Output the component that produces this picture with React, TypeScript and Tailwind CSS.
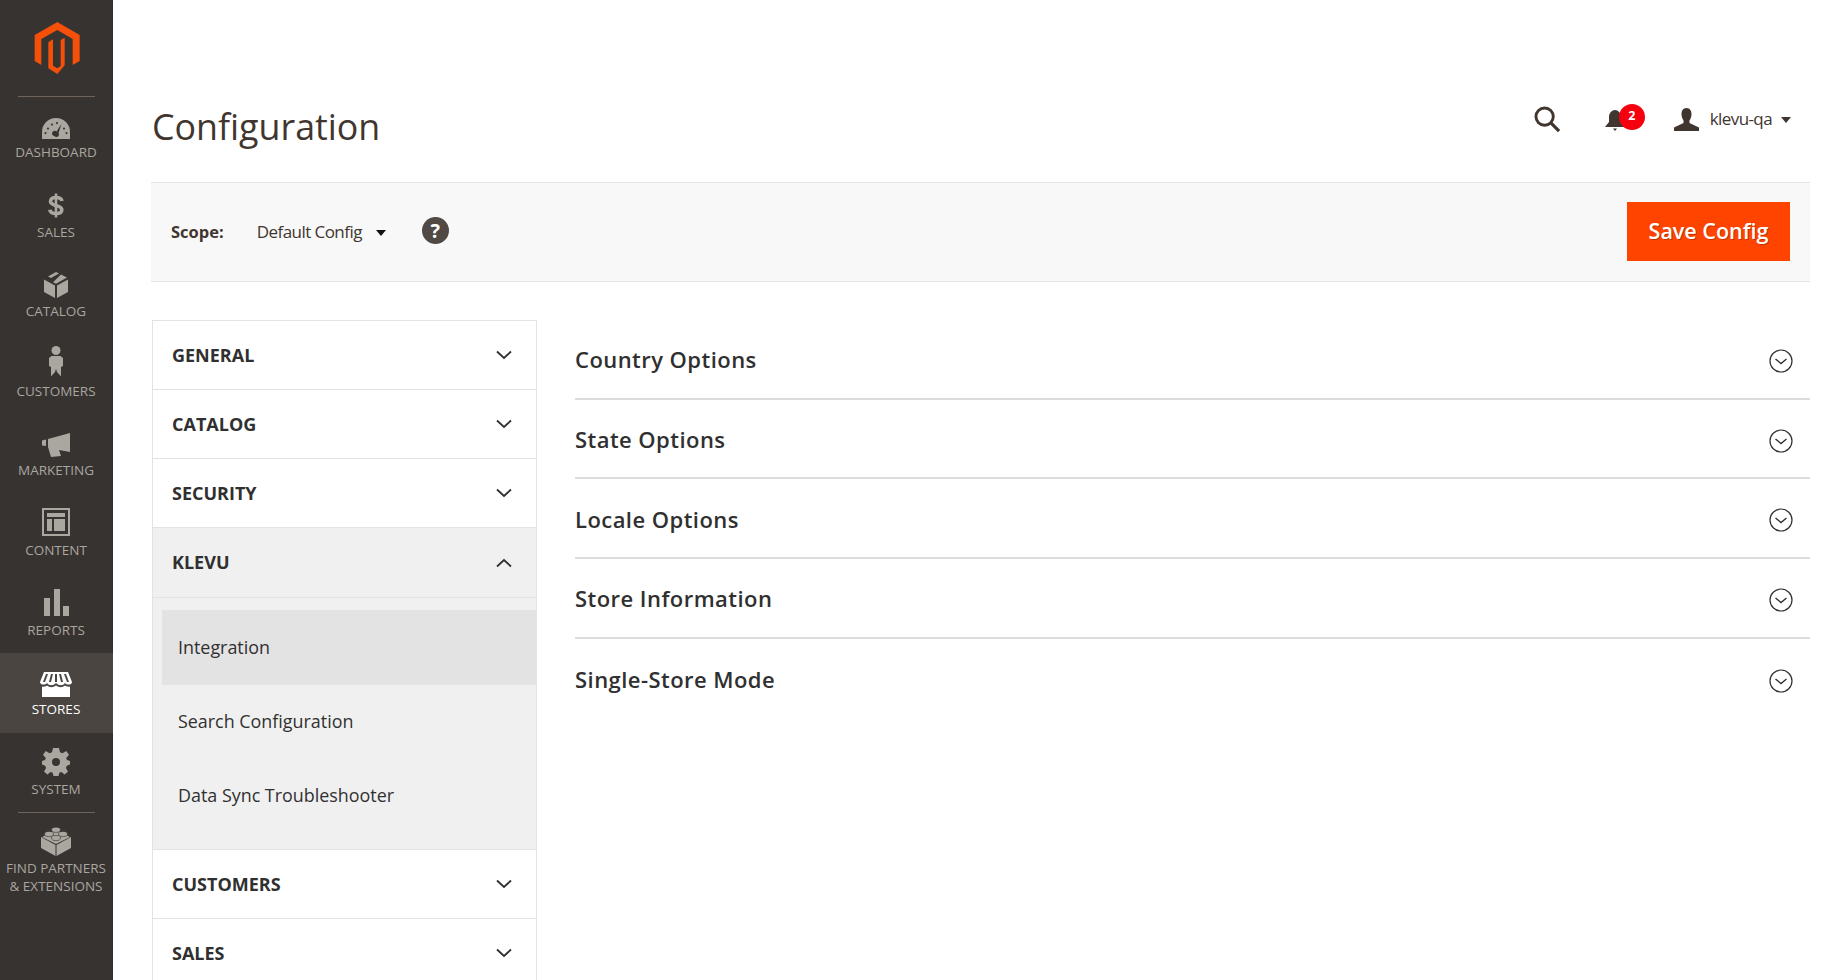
import { ReactNode } from 'react';

const FONT = "font-['Open_Sans',sans-serif]";

function Logo() {
    return (
        <svg viewBox="100 66 138 156" className="w-[46px] h-[52px]">
            <path fill="#f4500a" d="M170 66 237 105V183L216 195V117L170 90 122 117V195L102 183V105Z" />
            <path fill="#f4500a" d="M180 120 192 113V196L170 222 143 205V127L157 118V197L170 205 180 198Z" />
        </svg>
    );
}

const iconFill = 'currentColor';

const navIcons: Record<string, ReactNode> = {
    dashboard: (
        <svg viewBox="0 0 28 21" className="w-[28px] h-[21px]" fill={iconFill}>
            <path fillRule="evenodd" d="M0 21V14A14 14 0 0 1 28 14V21ZM6 9.500a1 1 0 1 0 .01 0ZM10 5.500a1 1 0 1 0 .01 0ZM15 4a1 1 0 1 0 .01 0ZM22 9.500a1 1 0 1 0 .01 0ZM3.500 14a1 1 0 1 0 .01 0ZM24.500 14a1 1 0 1 0 .01 0ZM19.500 6 14.500 13.500A2.500 2.500 0 0 0 11 17.500L13 18.500A2.500 2.500 0 0 0 16.500 15Z" />
        </svg>
    ),
    sales: (
        <svg viewBox="0 0 16 24" className="w-[16px] h-[25px]" fill="none" stroke={iconFill}>
            <path strokeWidth="3.600" d="M14 7.500C13.500 5 11 4 8 4 4.500 4 2.500 5.500 2.500 8S5 11 8 12 13.800 13.500 13.800 16.200 11.500 20 8 20 2.300 19 1.800 16.200" />
            <path strokeWidth="2.600" d="M8 0V24" />
        </svg>
    ),
    catalog: (
        <svg viewBox="0 0 24 26" className="w-[24px] h-[26px]" fill={iconFill}>
            <path d="M0 7.500 11 13.500V26L0 20ZM24 7.500 13 13.500V26L24 20ZM12 0 15 1.500 7 6 4 4.500ZM17 2.500 23 5.500 12 11.800 9 10.200Z" />
        </svg>
    ),
    customers: (
        <svg viewBox="0 0 14 31" className="w-[14px] h-[31px]" fill={iconFill}>
            <circle cx="7" cy="4.500" r="4.500" />
            <path d="M2.500 10H11.500L14 12V20L12 21 12 30.500 8 26 7 23 6 26 2 30.500 2 21 0 20V12Z" />
        </svg>
    ),
    marketing: (
        <svg viewBox="0 0 28 24" className="w-[28px] h-[24px]" fill={iconFill}>
            <path d="M0 7.500 4 6.500V13L0 12.500ZM6 6 28 0V19L17 17 19 23 9 24 6 14Z" />
        </svg>
    ),
    content: (
        <svg viewBox="0 0 28 28" className="w-[28px] h-[28px]" fill={iconFill}>
            <path fillRule="evenodd" d="M0 0H28V28H0ZM2 2V26H26V2ZM5 5H23V9H5ZM5 11H10V23H5ZM12 11H23V23H12Z" />
        </svg>
    ),
    reports: (
        <svg viewBox="0 0 25 27" className="w-[25px] h-[27px]" fill={iconFill}>
            <path d="M0 9H6V27H0ZM10 0H16V27H10ZM19 17H25V27H19Z" />
        </svg>
    ),
    stores: (
        <svg viewBox="0 0 32 26" className="w-[32px] h-[26px]" fill={iconFill}>
            <path fillRule="evenodd" d="M4 0H28L32 10C32 13 27 13.500 25 11 23 14 19 14 16 11 13 14 9 14 7 11 5 13.500 0 13 0 10ZM6 2 3 10H5L8 2ZM11 2 9 10H11L13 2ZM15 2V10H17V2ZM19 2 21 10H23L21 2ZM24 2 27 10H29L26 2ZM2 14.500C4 15 6 14.500 7 13.500 10 16 13 15.500 16 13.500 19 15.500 22 16 25 13.500 26 14.500 28 15 30 14.500V25H2Z" />
        </svg>
    ),
    system: (
        <svg viewBox="0 0 28 28" className="w-[28px] h-[28px]" fill={iconFill}>
            <path fillRule="evenodd" d="M11 0H17L18 4.200 20.500 5.300 24.200 3 27 6.800 24.200 10 25 12 28 13V16.500L24.800 17.800 24 20 26 23.800 22.500 26.500 19.500 24 17.500 24.500 16.500 28H11.500L10.500 24.500 8.500 24 5.500 26.500 2 23.800 4 20 3.200 17.800 0 16.500V13L3 12 3.800 10 1 6.800 3.800 3 7.500 5.300 10 4.200ZM14 10A4 4 0 1 0 14 18 4 4 0 1 0 14 10Z" />
        </svg>
    ),
    partners: (
        <svg viewBox="0 0 30 29" className="w-[30px] h-[29px]" fill={iconFill}>
            <path d="M0 10 14.500 18V29L0 21ZM30 10 15.500 18V29L30 21Z" />
            <path d="M15 3 29 10 15 17 1 10Z" />
            <ellipse cx="15" cy="2.800" rx="4.500" ry="2.600" stroke="#373330" strokeWidth=".6" />
            <ellipse cx="8" cy="7" rx="4.500" ry="2.600" stroke="#373330" strokeWidth=".6" />
            <ellipse cx="22" cy="7" rx="4.500" ry="2.600" stroke="#373330" strokeWidth=".6" />
            <ellipse cx="15" cy="11" rx="4.500" ry="2.600" stroke="#373330" strokeWidth=".6" />
        </svg>
    ),
};

const navItems = [
    { id: 'dashboard', label: 'DASHBOARD', pad: 'pt-[16px]' },
    { id: 'sales', label: 'SALES', pad: 'pt-[12px]' },
    { id: 'catalog', label: 'CATALOG', pad: 'pt-[11px]' },
    { id: 'customers', label: 'CUSTOMERS', pad: 'pt-[6px]' },
    { id: 'marketing', label: 'MARKETING', pad: 'pt-[13px]' },
    { id: 'content', label: 'CONTENT', pad: 'pt-[9px]' },
    { id: 'reports', label: 'REPORTS', pad: 'pt-[10px]' },
    { id: 'stores', label: 'STORES', pad: 'pt-[15px]', active: true },
    { id: 'system', label: 'SYSTEM', pad: 'pt-[10px]' },
];

function Sidebar() {
    return (
        <aside className="w-[113px] shrink-0 bg-[#373330] shadow-[inset_-1px_0_0_#312e2b] flex flex-col">
            <div className="h-[96px] flex justify-center pt-[22px]">
                <Logo />
            </div>
            <div className="h-[1px] mx-[18px] bg-[#6f645c] -mb-[1px]" />
            {navItems.map((item) => (
                <div
                    key={item.id}
                    className={`h-[79.6px] flex flex-col items-center pr-[1px] ${item.active ? 'bg-[#4a4540] text-white' : 'text-[#aaa6a0]'}`}
                >
                    <div className={`h-[48px] flex items-center justify-center ${item.pad}`}>{navIcons[item.id]}</div>
                    <span className="text-[13.5px] leading-[16px]">{item.label}</span>
                </div>
            ))}
            <div className="h-[1px] mx-[18px] bg-[#6f645c]" />
            <div className="flex flex-col items-center text-[#aaa6a0] pt-[14px] pr-[1px]">
                {navIcons.partners}
                <span className="text-[13.5px] leading-[18px] text-center mt-[3px]">
                    FIND PARTNERS
                    <br />& EXTENSIONS
                </span>
            </div>
        </aside>
    );
}

function Header() {
    return (
        <div className="h-[182px] flex items-start justify-between pl-[1px]">
            <h1 className="text-[35.800px] leading-[50px] mt-[101px] text-[#41362f] font-normal">Configuration</h1>
            <div className="flex items-center mt-[106px] pr-[19px] text-[#41362f]">
                <svg viewBox="0 0 28 28" className="w-[27px] h-[27px]" fill="none" stroke="#41362f">
                    <circle cx="11" cy="11" r="9" strokeWidth="3" />
                    <path d="M17.500 17.500 26 26" strokeWidth="3.400" />
                </svg>
                <div className="relative ml-[44px] w-[20px] h-[24px]">
                    <svg viewBox="0 0 20 24" className="w-[20px] h-[24px]" fill="#41362f">
                        <path d="M10 2C13 2 16 5 16 9V14L20 19H0L4 14V9C4 5 7 2 10 2Z" />
                        <path d="M8 20.500H12L10 23Z" />
                    </svg>
                    <span className="absolute left-[14px] -top-[4px] w-[26px] h-[26px] rounded-full bg-[#f5000f] text-white text-[12.5px] font-bold flex items-center justify-center">
                        2
                    </span>
                </div>
                <svg viewBox="0 0 25 23" className="w-[25px] h-[23px] ml-[49px]" fill="#41362f">
                    <path d="M12.500 0C16 0 17.500 3 17.500 6 17.500 9 16.500 11 15.500 12.500V15L25 19.500V23H0V19.500L9.500 15V12.500C8.500 11 7.500 9 7.500 6 7.500 3 9 0 12.500 0Z" />
                </svg>
                <span className="ml-[11px] text-[17px] tracking-[-0.6px] -mt-[1px]">klevu-qa</span>
                <span className="ml-[9px] w-0 h-0 border-x-[5px] border-x-transparent border-t-[6px] border-t-[#41362f]" />
            </div>
        </div>
    );
}

function Toolbar() {
    return (
        <div className="h-[100px] bg-[#f8f8f8] border-y border-[#e3e3e3] flex items-center justify-between pl-[20px] pr-[20px] text-[#41362f]">
            <div className="flex items-center">
                <span className="text-[16.500px] font-bold">Scope:</span>
                <span className="ml-[33px] text-[17px] tracking-[-0.55px]">Default Config</span>
                <span className="ml-[14px] mt-[2px] w-0 h-0 border-x-[5px] border-x-transparent border-t-[6px] border-t-[#111]" />
                <span className="ml-[36px] w-[27px] h-[27px] rounded-full bg-[#514943] text-white text-[20px] font-bold flex items-center justify-center -mt-[3px]">
                    ?
                </span>
            </div>
            <button className="w-[163px] h-[59px] -mt-[1px] bg-[#ff4400] text-white text-[21.500px] font-semibold [text-shadow:1px_1px_0_rgba(0,0,0,0.25)]">
                Save Config
            </button>
        </div>
    );
}

function Chevron({ up }: { up?: boolean }) {
    return (
        <svg viewBox="0 0 16 10" className="w-[16px] h-[10px]" fill="none" stroke="#303030" strokeWidth="1.800">
            <path d={up ? 'M1 8.500 8 2 15 8.500' : 'M1 1.500 8 8 15 1.500'} />
        </svg>
    );
}

function TabRow({ label, open, short }: { label: string; open?: boolean; short?: boolean }) {
    return (
        <div
            className={`${short ? 'h-[70px]' : 'h-[69px]'} flex items-center justify-between pl-[19px] pr-[24px] border-b border-[#e3e3e3] ${open ? 'bg-[#f0f0f0]' : ''}`}
        >
            <span className="text-[18px] font-bold text-[#303030]">{label}</span>
            <Chevron up={open} />
        </div>
    );
}

const subItems = [
    { label: 'Integration', cls: 'h-[75px] bg-[#e3e3e3]' },
    { label: 'Search Configuration', cls: 'h-[73px]' },
    { label: 'Data Sync Troubleshooter', cls: 'h-[75px]' },
];

function ConfigTabs() {
    return (
        <div className="w-[385px] shrink-0 border-x border-t border-[#e3e3e3]">
            <TabRow label="GENERAL" />
            <TabRow label="CATALOG" />
            <TabRow label="SECURITY" />
            <TabRow label="KLEVU" open short />
            <div className="bg-[#f0f0f0] pt-[12px] pl-[9px] pb-[16px] border-b border-[#e3e3e3]">
                {subItems.map((s) => (
                    <div key={s.label} className={`${s.cls} flex items-center pl-[16px] text-[17.900px] text-[#303030]`}>
                        {s.label}
                    </div>
                ))}
            </div>
            <TabRow label="CUSTOMERS" />
            <TabRow label="SALES" />
        </div>
    );
}

const sections = ['Country Options', 'State Options', 'Locale Options', 'Store Information', 'Single-Store Mode'];

function Sections() {
    return (
        <div className="flex-1 min-w-0">
            {sections.map((s, i) => (
                <div
                    key={s}
                    className={`h-[79.7px] flex items-center justify-between pr-[17px] ${i < sections.length - 1 ? 'border-b-2 border-[#dcdcdc]' : ''}`}
                >
                    <span className="text-[22px] font-semibold tracking-[0.45px] text-[#303030] mt-[2px]">{s}</span>
                    <svg viewBox="0 0 24 24" className="w-[24px] h-[24px] mt-[4px]" fill="none" stroke="#303030">
                        <circle cx="12" cy="12" r="11" strokeWidth="1.200" />
                        <path d="M6.500 10 12 14.500 17.500 10" strokeWidth="1.400" />
                    </svg>
                </div>
            ))}
        </div>
    );
}

export default function App() {
    return (
        <div className={`${FONT} w-[1848px] h-[980px] overflow-hidden flex bg-white`}>
            <Sidebar />
            <main className="flex-1 min-w-0 pl-[38px] pr-[38px]">
                <Header />
                <Toolbar />
                <div className="flex gap-[38px] mt-[38px] pl-[1px]">
                    <ConfigTabs />
                    <Sections />
                </div>
            </main>
        </div>
    );
}
